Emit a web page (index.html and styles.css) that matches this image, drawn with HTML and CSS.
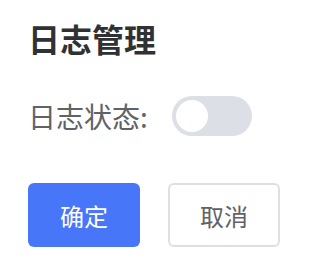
FILE: index.html
```html
<!DOCTYPE html>
<html lang="zh-CN">
<head>
    <meta charset="UTF-8">
    <meta name="viewport" content="width=device-width, initial-scale=1.0">
    <title>日志管理</title>
    <link rel="stylesheet" href="styles.css">
</head>
<body>

    <div class="panel">
        <h1 class="title">日志管理</h1>

        <div class="form-row">
            <span class="label">日志状态:</span>
            <div class="switch">
                <span class="switch-knob"></span>
            </div>
        </div>

        <div class="actions">
            <button class="btn btn-primary">确定</button>
            <button class="btn btn-default">取消</button>
        </div>
    </div>

</body>
</html>
```

FILE: styles.css
```css
body {
    margin: 0;
    padding: 0;
    background-color: #fff;
    font-family: "Noto Sans CJK SC", "Noto Sans", sans-serif;
}

.panel {
    padding: 16px 28px;
}

.title {
    margin: 0;
    font-size: 32px;
    line-height: 44px;
    font-weight: bold;
    color: #303133;
}

.form-row {
    display: flex;
    align-items: center;
    margin-top: 36px;
}

.label {
    font-size: 28px;
    line-height: 40px;
    color: #606266;
    margin-right: 24px;
}

.switch {
    width: 80px;
    height: 40px;
    border-radius: 20px;
    background-color: #dcdfe6;
    position: relative;
}

.switch-knob {
    position: absolute;
    top: 4px;
    left: 4px;
    width: 32px;
    height: 32px;
    border-radius: 50%;
    background-color: #fff;
}

.actions {
    display: flex;
    gap: 28px;
    margin-top: 47px;
}

.btn {
    width: 112px;
    height: 64px;
    border-radius: 6px;
    font-family: inherit;
    font-size: 24px;
    cursor: pointer;
    box-sizing: border-box;
}

.btn-primary {
    background-color: #4876f8;
    border: none;
    color: #fff;
}

.btn-default {
    background-color: #fff;
    border: 2px solid #dcdfe6;
    color: #606266;
}
```
